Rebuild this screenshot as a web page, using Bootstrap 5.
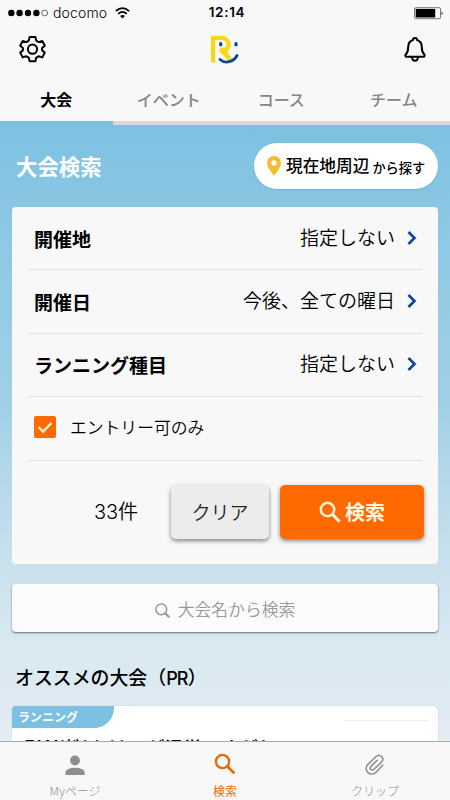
<!DOCTYPE html>
<html lang="ja">
<head>
<meta charset="utf-8">
<meta name="viewport" content="width=device-width, initial-scale=1">
<title>大会検索</title>
<link href="https://cdn.jsdelivr.net/npm/bootstrap@5.3.0/dist/css/bootstrap.min.css" rel="stylesheet">
<style>
body{font-family:"Noto Sans CJK JP",sans-serif;color:#000;line-height:1;background:#f8f8f8}
svg{display:block;flex:none}
.screen{width:450px;height:800px}
.status{height:24px;font-family:Inter,"Noto Sans CJK JP",sans-serif;font-size:13.5px;padding:2px 7px 0 8px}
.status>*{flex:1 1 0}
.carrier{font-size:14px;font-weight:300;letter-spacing:.15px}
.clock{font-weight:600;font-size:13.5px;letter-spacing:.7px;padding-left:3px}
.topbar{height:52px;padding:0 22px 2px 19px}
.logo{margin-left:1px}
.tabs{height:49px}
.tabs .nav-link{height:49px;padding:0 0 1px;border-radius:0;border-bottom:4px solid #d8d8d8;color:#858585;font-size:16px;font-weight:500;line-height:46px}
.tabs .nav-link.active{color:#000;font-weight:700;border-color:#7cc1e1}
.sky{min-height:0;background:linear-gradient(#7cc1e1 0,#8ac7e4 14%,#93cae5 25%,#a0cfe6 45%,#b9daea 60%,#cde2ee 74%,#d9e9f1 85%,#e4ebf3 100%);padding:18px 12px 0}
.heading{height:45px;padding-left:4px;margin-bottom:19px}
.heading h1{font-size:21.4px;color:#fff;font-weight:700}
.place{width:184px;height:46px;background:#fff;padding:0 0 0 13px;box-shadow:0 1px 2px #4b8aa855}
.place b{font-size:16.7px;font-weight:500;margin-left:5px}
.place small{font-size:13.2px;font-weight:500;margin:5px 0 0 3px}
.panel{height:357px;background:#f8f8f8;border-radius:4px;padding:0 16px}
.line{height:63.5px;border-bottom:1.5px solid #e1e1e3;padding:0 5px 0 6px}
.line:first-child{height:63px}
.line strong{font-size:19px;font-weight:700}
.line .val{font-size:19px;font-weight:350;margin-right:11px;padding-bottom:4px}
.line svg{margin-bottom:1px}
.tick{width:22px;height:22px;background:#ff6a00;border-radius:2px;margin-bottom:2px}
.only{font-size:16.8px;font-weight:350;margin:0 0 2px 14px}
.actions{padding-top:24.5px;margin-right:-2px}
.count{font-size:20px;font-weight:350;width:143px;padding-left:33px;font-family:Inter,"Noto Sans CJK JP",sans-serif}
.act{height:54px;border:0;border-radius:5px;font-size:19px;box-shadow:0 2px 4px #0007;padding:0}
.clear{width:98px;background:#ececec;font-weight:350}
.go,.go:hover{width:144px;background:#ff6a00;color:#fff8e8;font-weight:700;margin-left:11px;font-size:20px}
.finder{height:48px;margin-top:20px;background:#fbfbfb;border-radius:4px;color:#999;font-size:16.8px;font-weight:350;box-shadow:0 1px 2px #0008}
.finder span{padding-top:2px}
.pr{font-size:18.9px;font-weight:500;margin:34px 0 20px 3px;height:20px;line-height:21px}
.pr span{font-family:Inter,sans-serif;font-size:18px;letter-spacing:-.8px}
.entry{height:80px;background:#fff;border-radius:5px;box-shadow:0 0 1px #7899aa}
.tag{width:102px;height:22px;background:#7cc1e1;color:#fff;font-size:12px;font-weight:700;line-height:22px;padding-left:6px;border-radius:4px 0 20px 0}
.rule{width:84px;height:1px;background:#eee;margin:14px 10px 0 0}
.title{font-size:18.7px;font-weight:500;margin:9px 0 0 12px;line-height:20px}
.title span{font-family:Inter,sans-serif;font-size:20.5px}
.bottom{height:59px;background:#f8f8f8;border-top:1px solid #aaa;font-size:12px;font-weight:300;color:#888}
.bottom .nav-link{color:#8e8e8e;padding:9px 0 0;height:58px}
.bottom .nav-link.active{color:#e96c12;font-weight:400}
.bottom span{margin-top:8px}
</style>
</head>
<body>
<div class="screen d-flex flex-column overflow-hidden">
<header>
<div class="status d-flex align-items-center">
<div class="d-flex align-items-center">
<svg width="41" height="8" viewBox="0 0 41 8"><g><circle cx="3.3" cy="4" r="3.2"/><circle cx="11.6" cy="4" r="3.2"/><circle cx="20" cy="4" r="3.2"/><circle cx="28.4" cy="4" r="3.2"/></g><circle cx="36.7" cy="4" r="2.9" fill="none" stroke="#333" stroke-width=".7"/></svg>
<span class="carrier ms-1">docomo</span>
<svg class="ms-2" width="15" height="12" viewBox="0 0 15 12" fill="none" stroke="#000" stroke-width="1.6"><path d="M.8 4.2Q7.5-1.9 14.2 4.2M3.2 6.8q4.3-3.7 8.6 0"/><path d="M5.1 8.9q2.4-2 4.8 0L7.5 11.4z" fill="#000" stroke="none"/></svg>
</div>
<div class="clock text-center">12:14</div>
<div class="d-flex justify-content-end"><svg width="29" height="13" viewBox="0 0 29 13"><rect x=".5" y=".7" width="26" height="11" rx="1.3" fill="none" stroke="#555" stroke-width=".8"/><rect x="1.7" y="1.9" width="19.5" height="8.6"/><path d="M27.6 4.2q1.8 2 0 4z"/></svg></div>
</div>
<div class="topbar d-flex justify-content-between align-items-center">
<svg width="27" height="28" viewBox="0 0 27 28" fill="none" stroke="#000" stroke-width="2" stroke-linejoin="round"><path d="M10.6 2h5.8l.8 3.6 2.5 1.5 3.6-1.2 2.5 4.9-2.7 2.2v2.4l2.7 2.2-2.5 4.8-3.6-1.1-2.5 1.4-.8 3.5h-5.8l-.8-3.5-2.5-1.4-3.6 1.1-2.5-4.8L3.9 15.4V13L1.2 10.8l2.5-4.9 3.6 1.2 2.5-1.5z"/><circle cx="13.5" cy="14.2" r="4.6"/></svg>
<svg class="logo" width="30" height="30" viewBox="0 0 30 30" fill="none"><path d="M3.100 28.400V3.800h8c9.500 0 9.500 12.200 2.400 12.200L20 25.500" stroke="#f9d616" stroke-width="4.300"/><path d="m8.500 16.500 6-2.500 5.500 9-3 2z" fill="#f9d616"/><path d="M10 25.500c5 4.500 13.500 2.800 17-4" stroke="#0c4a8b" stroke-width="2.800" stroke-linecap="round"/><ellipse cx="10.700" cy="10.200" rx="1.700" ry="2.200" fill="#0c4a8b"/><ellipse cx="26" cy="10.200" rx="1.700" ry="2.200" fill="#0c4a8b"/></svg>
<svg width="25" height="27" viewBox="0 0 25 27" fill="none" stroke="#000" stroke-width="2" stroke-linejoin="round"><path d="M10 4a2 2 0 1 1 4 0c3.200 1 4.800 3.500 4.800 7 0 4.600.7 5.800 2.500 7.500.8.800.3 2.300-.8 2.300h-17c-1.100 0-1.600-1.500-.8-2.300C4.500 16.800 5.200 15.600 5.200 11c0-3.500 1.600-6 4.800-7zM9 21.500c.4 4.400 5.600 4.400 6 0"/></svg>
</div>
<ul class="tabs nav nav-fill row row-cols-4 g-0 text-center">
<li class="nav-item"><a class="nav-link active" href="#">大会</a></li>
<li class="nav-item"><a class="nav-link" href="#">イベント</a></li>
<li class="nav-item"><a class="nav-link" href="#">コース</a></li>
<li class="nav-item"><a class="nav-link" href="#">チーム</a></li>
</ul>
</header>
<main class="sky flex-grow-1 overflow-hidden">
<div class="heading d-flex justify-content-between align-items-center">
<h1 class="m-0">大会検索</h1>
<a class="place rounded-pill d-flex align-items-center text-reset text-decoration-none" href="#">
<svg width="14" height="20" viewBox="0 0 14 20"><path fill="#f5bd2e" fill-rule="evenodd" d="M7 0a7 7 0 0 0-7 7c0 4.500 5 9.500 7 13 2-3.500 7-8.500 7-13a7 7 0 0 0-7-7zm0 4.200a2.700 2.700 0 1 1 0 5.400 2.700 2.700 0 0 1 0-5.400z"/></svg>
<b>現在地周辺</b><small>から探す</small></a>
</div>
<section class="panel">
<div class="line d-flex align-items-center"><strong>開催地</strong><span class="val ms-auto">指定しない</span><svg width="11" height="14" viewBox="0 0 11 14" fill="none" stroke="#0b459c" stroke-width="2.600"><path d="m2.500 1 6 6-6 6"/></svg></div>
<div class="line d-flex align-items-center"><strong>開催日</strong><span class="val ms-auto">今後、全ての曜日</span><svg width="11" height="14" viewBox="0 0 11 14" fill="none" stroke="#0b459c" stroke-width="2.600"><path d="m2.500 1 6 6-6 6"/></svg></div>
<div class="line d-flex align-items-center"><strong>ランニング種目</strong><span class="val ms-auto">指定しない</span><svg width="11" height="14" viewBox="0 0 11 14" fill="none" stroke="#0b459c" stroke-width="2.600"><path d="m2.500 1 6 6-6 6"/></svg></div>
<div class="line d-flex align-items-center"><span class="tick"><svg width="22" height="22" viewBox="0 0 22 22" fill="none" stroke="#fff3cf" stroke-width="2.300"><path d="m4.500 11 4.500 4.500 8.500-8.500"/></svg></span><span class="only">エントリー可のみ</span></div>
<div class="actions d-flex align-items-center">
<span class="count text-center flex-shrink-0">33件</span>
<button class="btn act clear flex-shrink-0">クリア</button>
<button class="btn act go d-flex align-items-center justify-content-center flex-shrink-0"><svg width="22" height="22" viewBox="0 0 22 22" fill="none" stroke="#fff3dc" stroke-width="2.500"><circle cx="8.500" cy="8.500" r="6.700"/><path d="m13.300 13.300 7.300 7.300" stroke-width="3"/></svg><span class="ms-1">検索</span></button>
</div>
</section>
<div class="finder d-flex align-items-center justify-content-center"><svg class="me-2 mt-1" width="15" height="15" viewBox="0 0 15 15" fill="none" stroke="#999" stroke-width="1.500"><circle cx="6.300" cy="6.300" r="5.400"/><path d="m10.200 10.200 4 4" stroke-width="2.200"/></svg><span>大会名から検索</span></div>
<h2 class="pr">オススメの大会（<span>PR</span>）</h2>
<article class="entry"><div class="d-flex justify-content-between"><div class="tag">ランニング</div><div class="rule"></div></div><div class="title text-nowrap"><span>RW</span>(株)かけいが温覚、すがしーコレ</div></article>
</main>
<nav class="bottom nav row row-cols-3 g-0">
<a class="nav-link d-flex flex-column align-items-center" href="#"><svg width="20" height="26" viewBox="0 0 20 26" fill="#8e8e8e"><circle cx="10" cy="9.500" r="4.900"/><path d="M.4 24v-2.500c0-6.500 19.200-6.500 19.200 0V24z"/></svg><span>Myページ</span></a>
<a class="nav-link active d-flex flex-column align-items-center" href="#"><svg width="22" height="26" viewBox="0 0 22 26" fill="none" stroke="#e66a0a" stroke-width="2.300"><circle cx="8.500" cy="10.500" r="6.600"/><path d="m13.200 15.200 7.200 7.200" stroke-width="2.700"/></svg><span>検索</span></a>
<a class="nav-link d-flex flex-column align-items-center" href="#"><svg width="20" height="26" viewBox="0 0 20 26" fill="none" stroke="#8a8a8a" stroke-width="1.500" stroke-linecap="round"><path d="m17.800 14-6.600 7.200C6 26-2.500 20 2.800 13.500L11 5.500c4-3.500 9 1.500 5.500 5.500L9 18.300c-2.500 2-5-.5-3.200-2.800l6.400-6.300"/></svg><span>クリップ</span></a>
</nav>
</div>
<script src="https://cdn.jsdelivr.net/npm/bootstrap@5.3.0/dist/js/bootstrap.bundle.min.js"></script>
</body>
</html>
